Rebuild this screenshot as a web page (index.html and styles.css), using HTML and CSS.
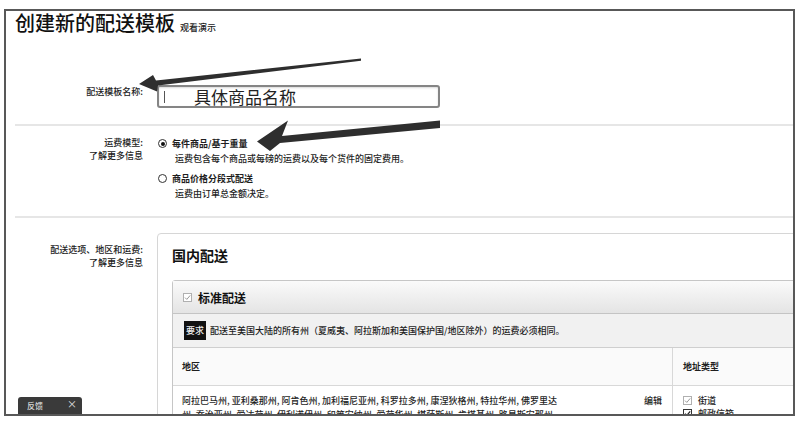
FILE: index.html
```html
<!DOCTYPE html>
<html lang="zh-CN">
<head>
    <meta charset="UTF-8">
    <meta name="viewport" content="width=device-width, initial-scale=1.0">
    <title>创建新的配送模板</title>
    <link rel="stylesheet" href="styles.css">
</head>
<body>
    <div class="frame">
        <div class="page">
            <div class="title-row">
                <h1>创建新的配送模板</h1>
                <a class="demo-link">观看演示</a>
            </div>

            <div class="row row-name">
                <div class="label">配送模板名称:</div>
                <div class="field">
                    <div class="text-input"><span class="cursor"></span><span class="value">具体商品名称</span></div>
                </div>
            </div>

            <div class="row row-model">
                <div class="label">运费模型:<br>了解更多信息</div>
                <div class="field">
                    <div class="option">
                        <div class="option-title"><span class="radio checked"></span>每件商品/基于重量</div>
                        <div class="option-desc">运费包含每个商品或每磅的运费以及每个货件的固定费用。</div>
                    </div>
                    <div class="option">
                        <div class="option-title"><span class="radio"></span>商品价格分段式配送</div>
                        <div class="option-desc">运费由订单总金额决定。</div>
                    </div>
                </div>
            </div>

            <div class="row row-ship">
                <div class="label">配送选项、地区和运费:<br>了解更多信息</div>
                <div class="field">
                    <div class="ship-box">
                        <h2>国内配送</h2>
                        <div class="panel">
                            <div class="panel-head">
                                <svg class="check" width="9" height="9" viewBox="0 0 9 9"><rect x="0.5" y="0.5" width="8" height="8" fill="#fff" stroke="#b0b0b0"/><path d="M2 4.6 L3.8 6.4 L7.2 2.4" fill="none" stroke="#999" stroke-width="1"/></svg>
                                标准配送
                            </div>
                            <div class="panel-note"><span class="badge">要求</span>配送至美国大陆的所有州（夏威夷、阿拉斯加和美国保护国/地区除外）的运费必须相同。</div>
                            <div class="ship-table">
                                <div class="th">地区</div>
                                <div class="th th-type">地址类型</div>
                                <div class="td td-region">
                                    <div class="regions">阿拉巴马州, 亚利桑那州, 阿肯色州, 加利福尼亚州, 科罗拉多州, 康涅狄格州, 特拉华州, 佛罗里达州, 乔治亚州, 爱达荷州, 伊利诺伊州, 印第安纳州, 爱荷华州, 堪萨斯州, 肯塔基州, 路易斯安那州</div>
                                    <a class="edit">编辑</a>
                                </div>
                                <div class="td td-type">
                                    <div class="type-item">
                                        <svg class="check" width="9" height="9" viewBox="0 0 9 9"><rect x="0.5" y="0.5" width="8" height="8" fill="#fff" stroke="#b0b0b0"/><path d="M2 4.6 L3.8 6.4 L7.2 2.4" fill="none" stroke="#999" stroke-width="1"/></svg>
                                        街道
                                    </div>
                                    <div class="type-item">
                                        <svg class="check" width="9" height="9" viewBox="0 0 9 9"><rect x="0.5" y="0.5" width="8" height="8" fill="#fff" stroke="#333"/><path d="M2 4.6 L3.8 6.4 L7.2 2.4" fill="none" stroke="#222" stroke-width="1.2"/></svg>
                                        邮政信箱
                                    </div>
                                </div>
                            </div>
                        </div>
                    </div>
                </div>
            </div>
        </div>

        <div class="feedback">反馈<span class="close">×</span></div>

        <svg class="arrows" width="800" height="421" viewBox="0 0 800 421">
            <polygon points="361,58.5 156,80.5 153,75 139,84 157,91.5 158,85.5 361,60.8" fill="#2e2e2e"/>
            <polygon points="440,120.5 282,136 288,120.5 257,141.5 270,151 280,143 440,128" fill="#2e2e2e"/>
        </svg>
    </div>
</body>
</html>
```

FILE: styles.css
```css
body {
    margin: 0;
    width: 800px;
    height: 421px;
    overflow: hidden;
    background-color: #fff;
    font-family: "Noto Sans CJK SC", "Noto Sans", sans-serif;
    font-weight: 500;
    color: #1e1e1e;
}
.frame {
    position: relative;
    margin: 9px 5px 0 4px;
    height: 403px;
    border: 2px solid #585858;
    overflow: hidden;
}
.page {
    padding-left: 9px;
}
.title-row {
    display: flex;
    align-items: baseline;
    height: 24px;
}
.title-row h1 {
    margin: 0;
    font-size: 20px;
    line-height: 24px;
    font-weight: 500;
    color: #111;
}
.demo-link {
    margin-left: 5px;
    font-size: 9px;
    color: #222;
}
.row {
    display: grid;
    grid-template-columns: 128px 1fr;
    column-gap: 14px;
    border-bottom: 2px solid #e6e6e6;
}
.label {
    text-align: right;
    font-size: 9px;
    line-height: 13px;
    color: #222;
}
.row-name {
    padding: 50px 0 16px;
}
.row-name .label {
    line-height: 14px;
}
.text-input {
    display: flex;
    align-items: center;
    width: 283px;
    height: 23px;
    box-sizing: border-box;
    border: 2px solid #858585;
    border-radius: 3px;
    box-shadow: inset 0 1px 2px rgba(0, 0, 0, 0.15);
}
.cursor {
    width: 1px;
    height: 12px;
    margin-left: 5px;
    background-color: #555;
}
.value {
    margin-left: 29px;
    font-size: 17px;
    line-height: 20px;
    font-weight: 400;
    color: #222;
}
.row-model {
    padding: 10px 0 15px;
}
.option + .option {
    margin-top: 5px;
}
.option-title {
    display: flex;
    align-items: center;
    font-size: 9px;
    line-height: 15px;
    font-weight: 700;
}
.option-desc {
    padding-left: 18px;
    font-size: 9px;
    line-height: 15px;
}
.radio {
    position: relative;
    width: 9px;
    height: 9px;
    margin: 0 5px 0 1px;
    box-sizing: border-box;
    border: 1px solid #333;
    border-radius: 50%;
}
.radio.checked::after {
    content: "";
    position: absolute;
    left: 1.5px;
    top: 1.5px;
    width: 4px;
    height: 4px;
    border-radius: 50%;
    background-color: #111;
}
.row-ship {
    padding-top: 25px;
    border-bottom: none;
}
.ship-box {
    margin: -10px -30px 0 0;
    padding: 12px 0 0 14px;
    height: 400px;
    border: 1px solid #d6d6d6;
    border-radius: 4px 0 0 0;
}
.ship-box h2 {
    margin: 0 0 16px;
    font-size: 14px;
    line-height: 18px;
    font-weight: 700;
    color: #111;
}
.panel {
    border: 1px solid #c6c6c6;
    border-radius: 3px 0 0 0;
}
.panel-head {
    display: flex;
    align-items: center;
    height: 32px;
    padding-left: 10px;
    background: linear-gradient(#fafafa, #e4e4e4);
    border-bottom: 1px solid #c4c4c4;
    font-size: 12px;
    font-weight: 700;
    color: #111;
}
.panel-head .check {
    margin-right: 6px;
}
.panel-note {
    display: flex;
    align-items: center;
    height: 33px;
    padding-left: 11px;
    background-color: #f1f1f1;
    border-bottom: 1px solid #cfcfcf;
    font-size: 9px;
}
.badge {
    margin-right: 4px;
    padding: 0 2px;
    line-height: 19px;
    background-color: #111;
    color: #eee;
}
.ship-table {
    display: grid;
    grid-template-columns: 499px 1fr;
    font-size: 9px;
}
.th {
    height: 37px;
    line-height: 37px;
    padding-left: 9px;
    font-weight: 700;
    background-color: #fafafa;
    border-bottom: 1px solid #d8d8d8;
}
.th-type,
.td-type {
    border-left: 1px solid #d8d8d8;
    padding-left: 10px;
}
.td {
    padding-top: 8px;
    line-height: 14px;
}
.td-region {
    display: flex;
    padding: 8px 10px 0 9px;
}
.regions {
    width: 382px;
}
.edit {
    margin-left: auto;
}
.type-item {
    display: flex;
    align-items: center;
    line-height: 13px;
}
.type-item .check {
    margin-right: 6px;
}
.feedback {
    position: absolute;
    left: 12px;
    bottom: 0;
    width: 64px;
    height: 17px;
    box-sizing: border-box;
    padding: 0 5px 0 9px;
    display: flex;
    align-items: center;
    justify-content: space-between;
    background-color: #3a3a3a;
    border-radius: 3px 3px 0 0;
    font-size: 8px;
    color: #d8d8d8;
}
.close {
    font-size: 10px;
    line-height: 10px;
    margin-top: -4px;
}
.arrows {
    position: absolute;
    left: -6px;
    top: -11px;
    pointer-events: none;
}
```
